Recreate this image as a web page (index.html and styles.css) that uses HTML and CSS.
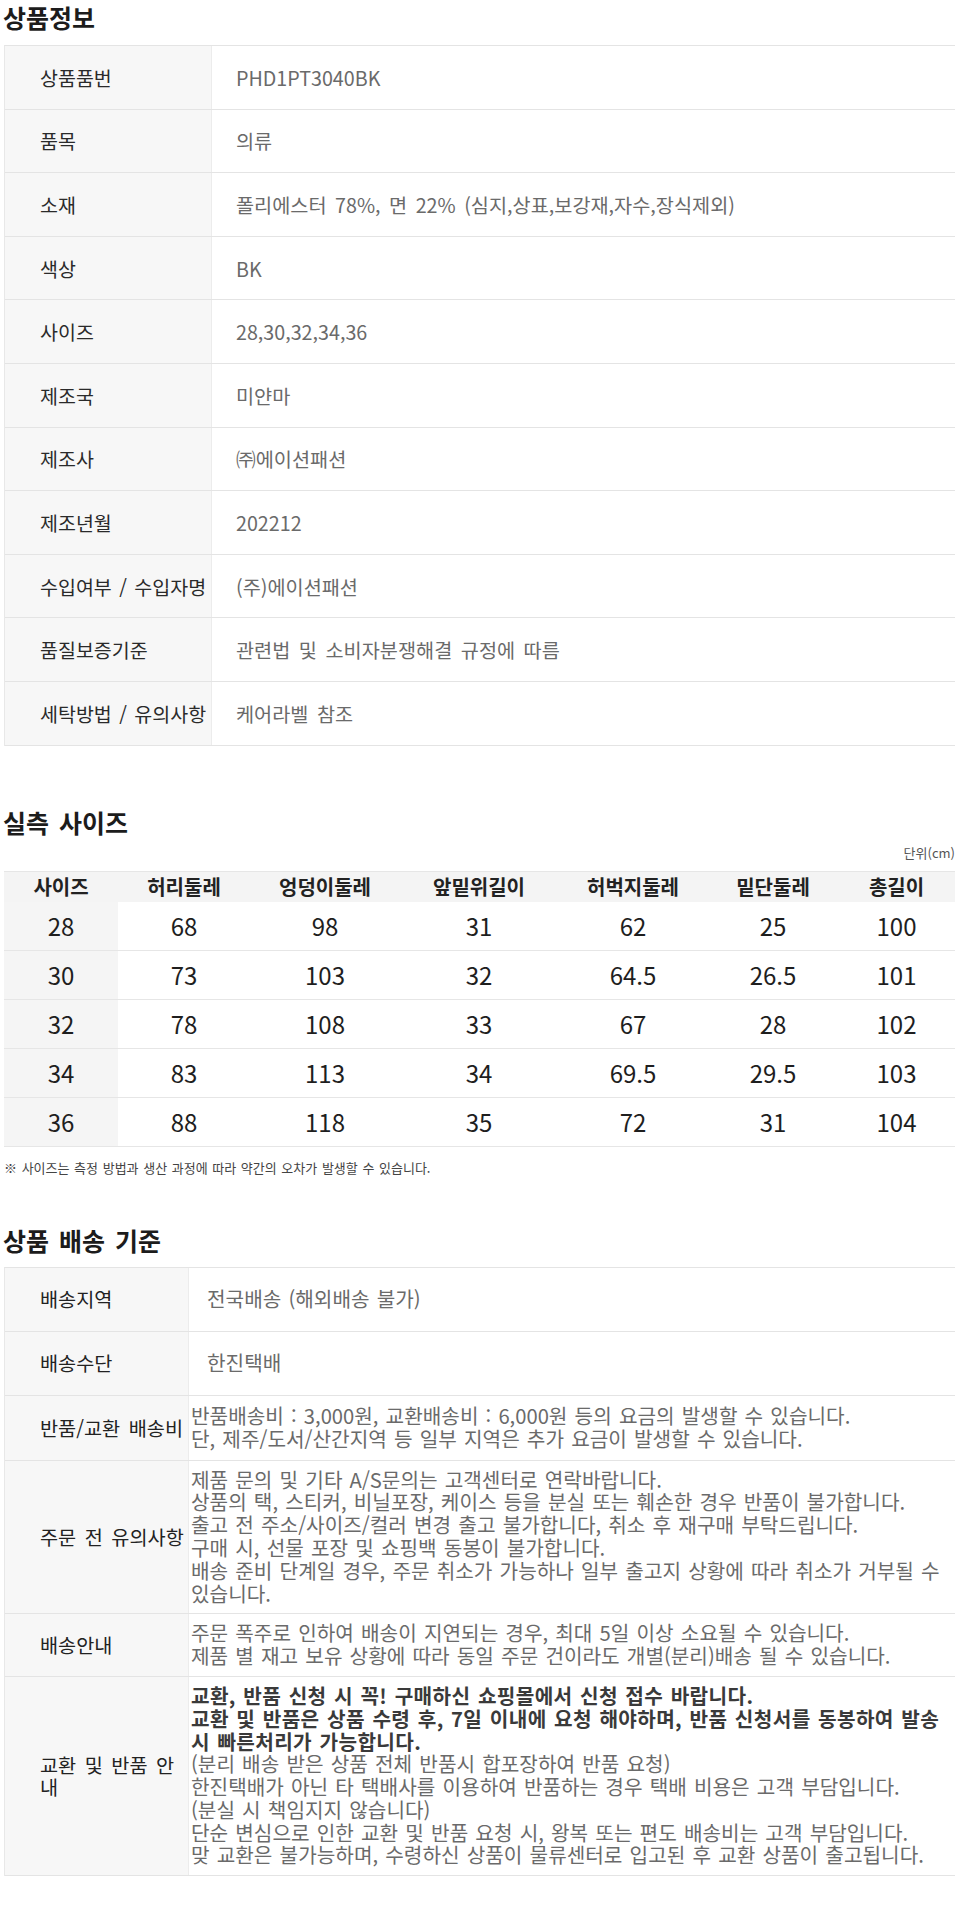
FILE: index.html
```html
<!DOCTYPE html>
<html lang="ko">
<head>
<meta charset="utf-8">
<title>상품정보</title>
<link rel="stylesheet" href="styles.css">
</head>
<body>
<div class="page">
  <h2 class="sec-title t1">상품정보</h2>
  <div class="info">
    <div class="row"><div class="lab">상품품번</div><div class="val">PHD1PT3040BK</div></div>
    <div class="row"><div class="lab">품목</div><div class="val">의류</div></div>
    <div class="row"><div class="lab">소재</div><div class="val">폴리에스터 78%, 면 22% (심지,상표,보강재,자수,장식제외)</div></div>
    <div class="row"><div class="lab">색상</div><div class="val">BK</div></div>
    <div class="row"><div class="lab">사이즈</div><div class="val">28,30,32,34,36</div></div>
    <div class="row"><div class="lab">제조국</div><div class="val">미얀마</div></div>
    <div class="row"><div class="lab">제조사</div><div class="val">㈜에이션패션</div></div>
    <div class="row"><div class="lab">제조년월</div><div class="val">202212</div></div>
    <div class="row"><div class="lab">수입여부 / 수입자명</div><div class="val">(주)에이션패션</div></div>
    <div class="row"><div class="lab">품질보증기준</div><div class="val">관련법 및 소비자분쟁해결 규정에 따름</div></div>
    <div class="row"><div class="lab">세탁방법 / 유의사항</div><div class="val">케어라벨 참조</div></div>
  </div>

  <h2 class="sec-title t2">실측 사이즈</h2>
  <div class="unit">단위(cm)</div>
  <table class="size">
    <colgroup>
      <col class="c1"><col class="c2"><col class="c3"><col class="c4"><col class="c5"><col class="c6"><col class="c7">
    </colgroup>
    <thead>
      <tr><th>사이즈</th><th>허리둘레</th><th>엉덩이둘레</th><th>앞밑위길이</th><th>허벅지둘레</th><th>밑단둘레</th><th>총길이</th></tr>
    </thead>
    <tbody>
      <tr><td class="first">28</td><td>68</td><td>98</td><td>31</td><td>62</td><td>25</td><td>100</td></tr>
      <tr><td class="first">30</td><td>73</td><td>103</td><td>32</td><td>64.5</td><td>26.5</td><td>101</td></tr>
      <tr><td class="first">32</td><td>78</td><td>108</td><td>33</td><td>67</td><td>28</td><td>102</td></tr>
      <tr><td class="first">34</td><td>83</td><td>113</td><td>34</td><td>69.5</td><td>29.5</td><td>103</td></tr>
      <tr><td class="first">36</td><td>88</td><td>118</td><td>35</td><td>72</td><td>31</td><td>104</td></tr>
    </tbody>
  </table>
  <p class="note">※ 사이즈는 측정 방법과 생산 과정에 따라 약간의 오차가 발생할 수 있습니다.</p>

  <h2 class="sec-title t3">상품 배송 기준</h2>
  <div class="ship">
    <div class="srow single"><div class="slab">배송지역</div><div class="sval pad">전국배송 (해외배송 불가)</div></div>
    <div class="srow single"><div class="slab">배송수단</div><div class="sval pad">한진택배</div></div>
    <div class="srow multi r-fee"><div class="slab">반품/교환 배송비</div><div class="sval">반품배송비 : 3,000원, 교환배송비 : 6,000원 등의 요금의 발생할 수 있습니다.<br>단, 제주/도서/산간지역 등 일부 지역은 추가 요금이 발생할 수 있습니다.</div></div>
    <div class="srow multi"><div class="slab">주문 전 유의사항</div><div class="sval">제품 문의 및 기타 A/S문의는 고객센터로 연락바랍니다.<br>상품의 택, 스티커, 비닐포장, 케이스 등을 분실 또는 훼손한 경우 반품이 불가합니다.<br>출고 전 주소/사이즈/컬러 변경 출고 불가합니다, 취소 후 재구매 부탁드립니다.<br>구매 시, 선물 포장 및 쇼핑백 동봉이 불가합니다.<br>배송 준비 단계일 경우, 주문 취소가 가능하나 일부 출고지 상황에 따라 취소가 거부될 수 있습니다.</div></div>
    <div class="srow multi"><div class="slab">배송안내</div><div class="sval">주문 폭주로 인하여 배송이 지연되는 경우, 최대 5일 이상 소요될 수 있습니다.<br>제품 별 재고 보유 상황에 따라 동일 주문 건이라도 개별(분리)배송 될 수 있습니다.</div></div>
    <div class="srow multi"><div class="slab">교환 및 반품 안내</div><div class="sval"><strong class="em">교환, 반품 신청 시 꼭! 구매하신 쇼핑몰에서 신청 접수 바랍니다.<br>교환 및 반품은 상품 수령 후, 7일 이내에 요청 해야하며, 반품 신청서를 동봉하여 발송 시 빠른처리가 가능합니다.</strong><br>(분리 배송 받은 상품 전체 반품시 합포장하여 반품 요청)<br>한진택배가 아닌 타 택배사를 이용하여 반품하는 경우 택배 비용은 고객 부담입니다.<br>(분실 시 책임지지 않습니다)<br>단순 변심으로 인한 교환 및 반품 요청 시, 왕복 또는 편도 배송비는 고객 부담입니다.<br>맞 교환은 불가능하며, 수령하신 상품이 물류센터로 입고된 후 교환 상품이 출고됩니다.</div></div>
  </div>
</div>
</body>
</html>
```

FILE: styles.css
```css
* { box-sizing: border-box; }

html, body {
  margin: 0;
  padding: 0;
  background: #ffffff;
}

body {
  font-family: "Noto Sans CJK KR", "Noto Sans", sans-serif;
  color: #222222;
}

.page {
  width: 960px;
  padding: 0 5px 0 4px;
}

.sec-title {
  margin: 0;
  height: 34px;
  font-size: 25px;
  line-height: 34px;
  font-weight: 700;
  word-spacing: 3px;
  color: #1c1c1c;
  margin-left: -1px;
}

.t1 { margin-bottom: 11px; }
.t2 { margin-top: 59px; }
.t3 { margin-top: 47px; margin-bottom: 10px; }

/* product info table */
.info {
  border-top: 1px solid #e4e4e4;
  border-left: 1px solid #e8e8e8;
}

.row {
  display: grid;
  grid-template-columns: 207px 1fr;
  height: 63.6px;
  border-bottom: 1px solid #e4e4e4;
}

.lab {
  display: flex;
  align-items: center;
  padding-left: 35px;
  background: #f7f7f7;
  border-right: 1px solid #ececec;
  font-size: 19.5px;
  word-spacing: 2px;
  color: #2a2a2a;
  white-space: nowrap;
}

.val {
  display: flex;
  align-items: center;
  padding-left: 24px;
  font-size: 19.7px;
  word-spacing: 3px;
  color: #6a6a6a;
}

/* size table */
.unit {
  margin: 5px 0 9px;
  height: 18px;
  line-height: 18px;
  font-size: 13px;
  color: #555555;
  text-align: right;
}

.size {
  width: 951px;
  border-collapse: separate;
  border-spacing: 0;
  table-layout: fixed;
}

.c1 { width: 114px; }
.c2 { width: 132px; }
.c3 { width: 150px; }
.c4 { width: 158px; }
.c5 { width: 150px; }
.c6 { width: 130px; }
.c7 { width: 117px; }

.size th {
  height: 31px;
  padding: 0;
  background: #f4f4f4;
  border-top: 1px solid #e6e6e6;
  font-size: 20px;
  line-height: 28px;
  font-weight: 700;
  color: #222222;
  text-align: center;
}

.size td {
  height: 49px;
  padding: 0;
  border-bottom: 1px solid #e6e6e6;
  font-size: 24px;
  line-height: 30px;
  color: #1e1e1e;
  text-align: center;
}

.size td.first { background: #f5f5f5; }

.note {
  margin: 13px 0 0;
  height: 16px;
  line-height: 16px;
  font-size: 13px;
  word-spacing: 1px;
  color: #444444;
}

/* shipping table */
.ship {
  border-top: 1px solid #e4e4e4;
  border-left: 1px solid #e8e8e8;
}

.srow {
  display: grid;
  grid-template-columns: 184px 1fr;
  border-bottom: 1px solid #e4e4e4;
}

.srow.single { height: 64px; }
.srow.r-fee { min-height: 65px; }

.slab {
  display: flex;
  align-items: center;
  padding-left: 35px;
  background: #f7f7f7;
  border-right: 1px solid #ececec;
  font-size: 19.7px;
  line-height: 22px;
  word-spacing: 3px;
  word-break: normal;
  color: #222222;
}

.sval {
  align-self: center;
  padding: 8px 0 8px 2px;
  font-size: 20.2px;
  line-height: 22.8px;
  word-spacing: 1.5px;
  word-break: keep-all;
  color: #6a6a6a;
}

.sval.pad {
  padding-left: 18px;
}

.em {
  font-weight: 700;
  color: #3a3a3a;
  letter-spacing: 0.35px;
}
```
